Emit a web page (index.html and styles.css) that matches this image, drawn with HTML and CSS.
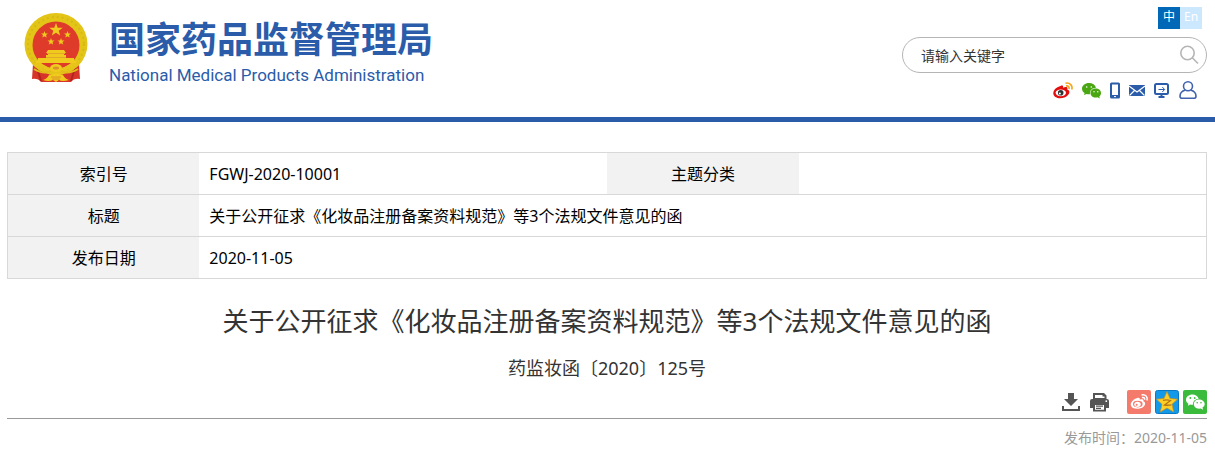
FILE: index.html
```html
<!DOCTYPE html>
<html lang="zh-CN">
<head>
  <meta charset="UTF-8">
  <meta name="viewport" content="width=device-width, initial-scale=1.0">
  <title>国家药品监督管理局</title>
  <link rel="stylesheet" href="styles.css">
</head>
<body>
  <header class="header">
    <a class="logo" href="#">
      <svg class="emblem" viewBox="0 0 64 70" aria-hidden="true">
        <path d="M9 51 L8 66 Q14 65 17 69 H47 Q50 65 56 66 L55 51Z" fill="#d8352a"/>
        <path d="M13 55 l4 13 M51 55 l-4 13" stroke="#b3241c" stroke-width="2"/>
        <ellipse cx="32" cy="31" rx="31.500" ry="31" fill="#e3c518"/>
        <ellipse cx="32" cy="31" rx="28" ry="27" fill="none" stroke="#d8b817" stroke-width="2" stroke-dasharray="2 3"/>
        <circle cx="32" cy="32" r="23.500" fill="#df3b2b"/>
        <g fill="#f0cb1d">
          <path d="M32 10 l1.700 4.700 5 .1 -4 3 1.500 4.800 -4.200 -2.900 -4.200 2.900 1.500 -4.800 -4 -3 5 -.1z"/>
          <path d="M20.500 18 l.9 2.400 2.600 .1 -2 1.600 .7 2.500 -2.200 -1.400 -2.200 1.400 .7 -2.500 -2 -1.600 2.600 -.1z"/>
          <path d="M43.500 18 l.9 2.400 2.600 .1 -2 1.600 .7 2.500 -2.200 -1.400 -2.200 1.400 .7 -2.500 -2 -1.600 2.600 -.1z"/>
          <path d="M27 25 l.9 2.400 2.600 .1 -2 1.600 .7 2.500 -2.200 -1.400 -2.200 1.400 .7 -2.500 -2 -1.600 2.600 -.1z"/>
          <path d="M37 25 l.9 2.400 2.600 .1 -2 1.600 .7 2.500 -2.200 -1.400 -2.200 1.400 .7 -2.500 -2 -1.600 2.600 -.1z"/>
          <path d="M24 37 h16 l2 3 h-2 v2 h2 v3 h8 v3 H14 v-3 h8 v-3 h2 v-2 h-2z"/>
          <path d="M11 48 h42 l-1 2 H12z"/>
        </g>
        <path d="M23 40.500 h18 M22 44.500 h20" stroke="#e2a829"/>
        <path d="M11 51 Q20 53 25 57 H39 Q44 53 53 51" fill="none" stroke="#e9c51c" stroke-width="3"/>
        <path d="M10 56 Q20 62 27 58 M54 56 Q44 62 37 58" fill="none" stroke="#e3ba1c" stroke-width="2"/>
        <ellipse cx="32" cy="55" rx="6" ry="4" fill="#f0cb1d"/>
        <ellipse cx="32" cy="55" rx="3" ry="1.500" fill="#d9902b"/>
        <path d="M19 67 Q23 66 25 62 Q32 59 39 62 Q41 66 45 67 Q38 69 35 67 L32 69 L29 67 Q25 69 19 67Z" fill="#f0cb1d"/>
        <path d="M27 64 h10 M28 66 h8" stroke="#d9902b"/>
      </svg>
      <span class="logo-text">
        <span class="logo-cn">国家药品监督管理局</span>
        <span class="logo-en">National Medical Products Administration</span>
      </span>
    </a>

    <div class="tools">
      <div class="lang">
        <a class="active" href="#">中</a>
        <a href="#">En</a>
      </div>
      <form class="search">
        <input type="text" placeholder="请输入关键字" aria-label="请输入关键字">
        <button type="button" aria-label="搜索">
          <svg width="20" height="20" viewBox="0 0 20 20" fill="none" stroke="#b5b5b5" stroke-width="1.600"><circle cx="8.500" cy="8" r="6.700"/><path d="M13.300 12.800 L19 18.500"/></svg>
        </button>
      </form>
      <nav class="links">
        <a href="#" aria-label="微博">
          <svg width="20" height="17" viewBox="0 0 20 17"><path d="M7.500 4 C9.500 3 10.500 4 10 5.800 C13 4.500 15 5 14.300 7.500 C17 8.300 17 11 15 13 C11 17.500 1 17.500 .3 11.500 C0 8 4 4.800 7.500 4Z" fill="#e20d0d"/><ellipse cx="7.800" cy="10.800" rx="5.200" ry="3.400" fill="#fff"/><circle cx="7.700" cy="10.800" r="2.800" fill="#333"/><circle cx="6.900" cy="11.500" r="1" fill="#fff"/><path d="M12.500 1.200 C17 .2 20 4 18.700 7.500 M13 4 C15.300 3.500 16.500 5 16 7" fill="none" stroke="#f4a417" stroke-width="1.600"/></svg>
        </a>
        <a href="#" aria-label="微信">
          <svg width="19" height="17" viewBox="0 0 19 17"><path d="M7 1 C3 1 0 3.500 0 6.700 C0 8.500 1 10 2.600 11 L2 13 L4.500 11.900 C5.500 12.200 7 12.300 8 12.200 C7.500 8.500 10 5.800 14 5.700 C13.200 3 10.500 1 7 1Z" fill="#4aa712"/><path d="M13.500 6.500 C10.500 6.500 8.500 8.600 8.500 11 C8.500 13.600 10.600 15.500 13.500 15.500 C14.300 15.500 15 15.400 15.600 15.200 L17.800 16.400 L17.300 14.400 C18.600 13.500 19 12.300 19 11 C19 8.500 17 6.500 13.500 6.500Z" fill="#4aa712"/><g fill="#fff"><circle cx="4.700" cy="5" r=".8"/><circle cx="9.300" cy="5" r=".8"/><circle cx="12" cy="9.700" r=".7"/><circle cx="15.800" cy="9.700" r=".7"/></g></svg>
        </a>
        <a href="#" aria-label="手机">
          <svg width="10" height="17" viewBox="0 0 10 17"><path d="M1.500 0.500 h7 q1.500 0 1.500 1.500 v13 q0 1.500 -1.500 1.500 h-7 q-1.500 0 -1.500 -1.500 v-13 q0 -1.500 1.500 -1.500z M2 2.500 v10.500 h6 v-10.500z" fill="#2a5caa" fill-rule="evenodd"/><path d="M4 14.600 h2" stroke="#fff"/></svg>
        </a>
        <a href="#" aria-label="邮箱">
          <svg width="16" height="17" viewBox="0 0 16 17"><path d="M0 3 h16 v11 H0z" fill="#2a5caa"/><path d="M0 4 L8 10 L16 4 M.5 13.500 L5.500 8.500 M15.500 13.500 L10.500 8.500" fill="none" stroke="#fff" stroke-width="1.100"/></svg>
        </a>
        <a href="#" aria-label="电脑版">
          <svg width="16" height="17" viewBox="0 0 16 17" fill="none" stroke="#2a5caa"><rect x="1" y="2" width="13" height="10" rx="1.500" stroke-width="2"/><path d="M4.500 7.500 h6 M8.300 5 l2.300 2.500 -2.300 2.500"/><path d="M7.500 12 v3 M4.500 15 h6" stroke-width="2"/></svg>
        </a>
        <a href="#" aria-label="用户">
          <svg width="18" height="18" viewBox="0 0 18 18" fill="none" stroke="#4262b0" stroke-width="1.600"><circle cx="9" cy="5.300" r="4.500"/><path d="M6.300 9 C3 10 1 12.500 1 15.200 Q1 17.200 3 17.200 H15 Q17 17.200 17 15.200 C17 12.500 15 10 11.700 9"/></svg>
        </a>
      </nav>
    </div>
  </header>

  <main class="content">
    <table class="info">
      <tr>
        <th scope="row">索引号</th>
        <td class="index">FGWJ-2020-10001</td>
        <th scope="row">主题分类</th>
        <td></td>
      </tr>
      <tr>
        <th scope="row">标题</th>
        <td colspan="3">关于公开征求《化妆品注册备案资料规范》等3个法规文件意见的函</td>
      </tr>
      <tr>
        <th scope="row">发布日期</th>
        <td colspan="3">2020-11-05</td>
      </tr>
    </table>

    <h1>关于公开征求《化妆品注册备案资料规范》等3个法规文件意见的函</h1>
    <p class="doc-no">药监妆函〔2020〕125号</p>

    <div class="actions">
      <div class="page-tools">
        <button type="button" aria-label="下载">
          <svg width="20" height="20" viewBox="0 0 20 20" fill="#555"><path d="M6 1 h6 v6 h4 l-7 7 -7 -7 h4z"/><path d="M0 14 h2 v3 h14 v-3 h2 v5 H0z"/></svg>
        </button>
        <button type="button" aria-label="打印">
          <svg width="20" height="20" viewBox="0 0 20 20" fill="#555"><path d="M3 1 h11 l2.500 2.500 V7 H3z M5 3 v3 h9.500 V4.500 H12.500 V3z" fill-rule="evenodd"/><path d="M2 7 h15 q2 0 2 2 v7 h-3 v-4 h-13 v4 H0 V9 q0 -2 2 -2z"/><path d="M3 11 h13 v8.500 H3z M5 13 v4.500 h9 v-4.500z" fill-rule="evenodd"/><path d="M5 13 h9 v4.500 H5z" fill="#fff"/><path d="M6 14.200 h7 M6 16.400 h5" stroke="#555" stroke-width="1.200"/><circle cx="16.300" cy="9.200" r=".9" fill="#fff"/></svg>
        </button>
      </div>
      <div class="share">
        <a href="#" aria-label="分享到微博">
          <svg width="24" height="24" viewBox="0 0 24 24"><rect width="24" height="24" rx="2" fill="#f47b6c"/><path d="M10.200 8 C12 7.200 13.200 8 12.700 9.700 C15.500 8.700 17 9.500 16.300 11.300 C19 12.200 18.500 15 16.500 16.700 C12.500 20 4.500 19.500 3.800 15 C3.500 12 7 8.800 10.200 8Z" fill="#fff"/><ellipse cx="10.800" cy="14.100" rx="4.800" ry="3.300" fill="#f47b6c"/><ellipse cx="10.500" cy="14.300" rx="3.200" ry="2.600" fill="#fff"/><circle cx="9.700" cy="14.800" r="1" fill="#f47b6c"/><path d="M14.500 5 C18.500 4 21 7 20 10.500 M15 7.500 C17 7 18 8.200 17.600 9.800" fill="none" stroke="#fff" stroke-width="1.500"/></svg>
        </a>
        <a href="#" aria-label="分享到QQ空间">
          <svg width="24" height="24" viewBox="0 0 24 24"><rect x=".5" y=".5" width="23" height="23" rx="2" fill="#1399e8" stroke="#0878c4"/><path d="M12 1.500 L15 8.500 L22.500 9.200 L17 14.200 L18.700 22 L12 18 L5.300 22 L7 14.200 L1.500 9.200 L9 8.500Z" fill="#fdcf27" stroke="#c99220" stroke-width=".7"/><path d="M8 10.300 Q12 9.500 15.500 10.500 L9.500 15 Q13 15.600 16.500 14.800" fill="none" stroke="#b87514" stroke-width="1.300"/></svg>
        </a>
        <a href="#" aria-label="分享到微信">
          <svg width="24" height="24" viewBox="0 0 24 24"><rect width="24" height="24" rx="2" fill="#3bbb3b"/><path d="M9.500 4.500 C5.800 4.500 3 6.800 3 9.700 C3 11.400 3.900 12.800 5.400 13.700 L4.900 15.700 L7.200 14.500 C8 14.700 9 14.800 10 14.700 C9.700 11.300 12 9 15.700 8.700 C15 6.200 12.500 4.500 9.500 4.500Z" fill="#fff"/><path d="M15.900 9.500 C13 9.500 10.800 11.500 10.800 14.100 C10.800 16.700 13 18.800 15.900 18.800 L17.800 18.500 L20.100 19.800 L19.500 17.600 C21 16.600 21.700 15.500 21.700 14.100 C21.700 11.500 19 9.500 15.900 9.500Z" fill="#fff"/><g fill="#3bbb3b"><circle cx="7.300" cy="8" r=".9"/><circle cx="11.700" cy="8" r=".9"/><circle cx="14.200" cy="12.700" r=".8"/><circle cx="18" cy="12.700" r=".8"/></g></svg>
        </a>
      </div>
    </div>
    <p class="pub-time">发布时间：2020-11-05</p>
  </main>
</body>
</html>
```

FILE: styles.css
```css
* {
  box-sizing: border-box;
}
body {
  margin: 0;
  background: #fff;
  color: #000;
  font-family: "Noto Sans", "Noto Sans CJK SC", sans-serif;
  font-size: 16px;
}
a {
  color: inherit;
  text-decoration: none;
}
svg {
  display: block;
}
button {
  padding: 0;
  border: 0;
  background: none;
  cursor: pointer;
}

/* header */
.header {
  display: flex;
  justify-content: space-between;
  align-items: flex-start;
  padding: 7px 8px 18px 24px;
  border-bottom: 5px solid #2a5caa;
}
.logo {
  display: flex;
  gap: 21px;
  padding-top: 6px;
  color: #2a5caa;
}
.emblem {
  width: 64px;
  height: 70px;
}
.logo-text {
  display: flex;
  flex-direction: column;
  gap: 5px;
  padding-top: 4px;
}
.logo-cn {
  font-family: "Noto Sans CJK SC", sans-serif;
  font-size: 36px;
  font-weight: bold;
  line-height: 40px;
}
.logo-en {
  font-family: Roboto, sans-serif;
  font-size: 17px;
  line-height: 26px;
}
.tools {
  display: flex;
  flex-direction: column;
  align-items: flex-end;
  gap: 8px;
}
.lang {
  display: flex;
  margin-right: 5px;
}
.lang a {
  width: 22px;
  height: 22px;
  background: #cce8ff;
  color: #fff;
  font-size: 12px;
  line-height: 20px;
  text-align: center;
}
.lang .active {
  background: #0068b7;
}
.search {
  display: flex;
  align-items: center;
  width: 305px;
  height: 36px;
  padding: 0 7px 0 18px;
  border: 1px solid #b5b5b5;
  border-radius: 18px;
}
.search input {
  flex: 1;
  min-width: 0;
  padding: 0;
  border: 0;
  outline: 0;
  background: none;
  color: #333;
  font-family: inherit;
  font-size: 14px;
}
.search input::placeholder {
  color: #333;
}
.links {
  display: flex;
  align-items: center;
  gap: 9px;
  margin-right: 10px;
}

/* document info */
.content {
  padding: 30px 8px 0 7px;
}
.info {
  width: 100%;
  border: 1px solid #d8d8d8;
  border-collapse: collapse;
  table-layout: fixed;
}
.info tr {
  border-bottom: 1px solid #d8d8d8;
}
.info th,
.info td {
  height: 42px;
  padding: 0 10px;
  line-height: 24px;
}
.info th {
  width: 16%;
  background: #f2f2f2;
  font-weight: normal;
}
.info td {
  text-align: left;
}
.info .index {
  width: 34%;
}

/* title */
h1 {
  margin: 22px 0 0;
  color: #333;
  font-size: 26px;
  font-weight: normal;
  line-height: 40px;
  text-align: center;
}
.doc-no {
  margin: 13px 0 0;
  color: #333;
  font-size: 18px;
  line-height: 28px;
  text-align: center;
}
.actions {
  display: flex;
  justify-content: flex-end;
  align-items: center;
  gap: 17px;
  padding: 8px 0 4px;
  border-bottom: 1px solid #999;
}
.page-tools {
  display: flex;
  gap: 8px;
}
.share {
  display: flex;
  gap: 4px;
}
.pub-time {
  margin: 8px 0 0;
  color: #999;
  font-size: 14px;
  line-height: 22px;
  text-align: right;
}
```
